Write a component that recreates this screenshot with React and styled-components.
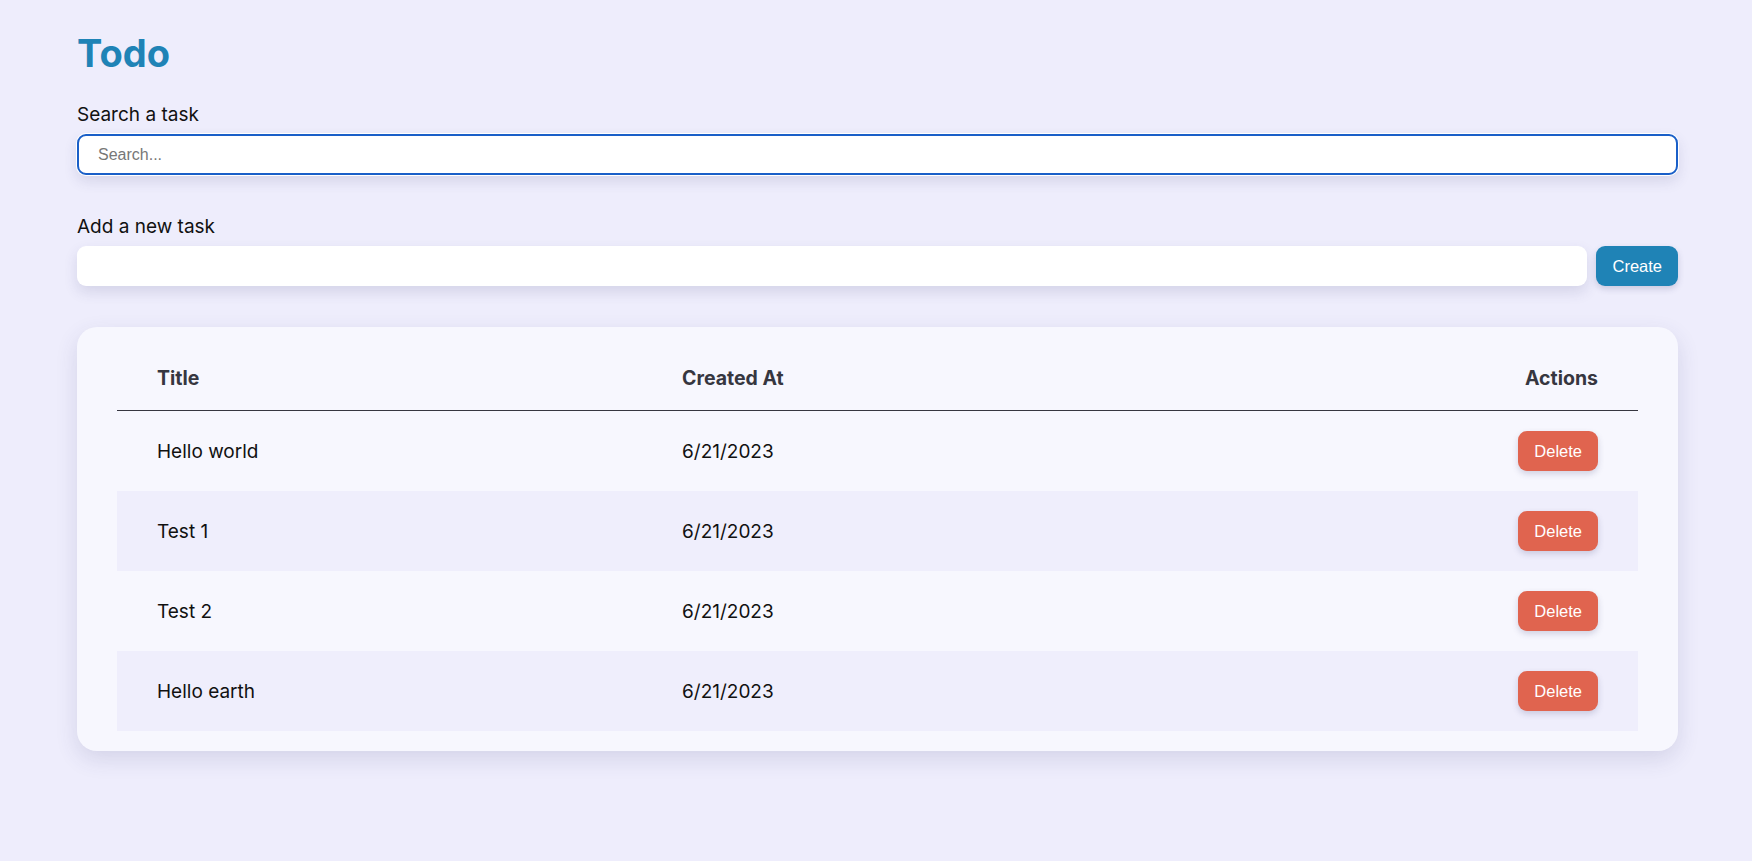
import React, {useState} from 'react'
import styled, {createGlobalStyle} from 'styled-components'

const GlobalStyle = createGlobalStyle`
  * { box-sizing: border-box; }
  body {
    margin: 0;
    background: #eeedfc;
    font-family: Inter, 'Noto Sans', sans-serif;
    color: #111;
  }
`

const Page = styled.main`
  width: 1601px;
  margin-left: 77px;
  padding-top: 29px;
  padding-bottom: 80px;
`

const Heading = styled.h1`
  margin: 0 0 26px;
  font-size: 38px;
  line-height: 48px;
  font-weight: 700;
  color: #1f83b6;
`

const Field = styled.section`
  display: flex;
  flex-direction: column;
  gap: 8px;
  margin-bottom: ${p => p.$spacing}px;
`

const Label = styled.label`
  font-size: 19px;
  line-height: 23px;
  color: #111;
`

const InputRow = styled.div`
  display: flex;
  gap: 9px;
`

const TextInput = styled.input`
  flex: 1 1 auto;
  min-width: 0;
  height: ${p => (p.$focused ? 41 : 40)}px;
  padding: 0 19px;
  border: ${p => (p.$focused ? '2px solid #1a5fc8' : '0')};
  border-radius: 9px;
  background: #fff;
  font-family: 'Liberation Sans', Arial, sans-serif;
  font-size: 16px;
  color: #222;
  outline: none;
  box-shadow: ${p => (p.$focused ? '0 0 0 1px #fff, ' : '')}0 6px 14px rgba(60, 60, 110, 0.14);
  &::placeholder { color: #777; }
`

const Button = styled.button`
  flex: none;
  height: 40px;
  padding: 0 ${p => p.$pad}px;
  border: 0;
  border-radius: 9px;
  background: ${p => p.$bg};
  color: #fff;
  font-family: 'Liberation Sans', Arial, sans-serif;
  font-size: 16.5px;
  cursor: pointer;
  box-shadow: 0 3px 6px rgba(60, 60, 110, 0.2);
`

const Card = styled.section`
  background: #f7f7fe;
  border-radius: 20px;
  padding: 20px 40px;
  box-shadow: 0 8px 22px rgba(60, 60, 110, 0.14);
`

const Grid = styled.div`
  display: grid;
  grid-template-columns: 525px 1fr 200px;
`

const HeadCell = styled.div`
  padding: 20px 40px;
  font-size: 19.5px;
  line-height: 23px;
  font-weight: 700;
  color: #363640;
  border-bottom: 1px solid #363640;
  text-align: ${p => (p.$right ? 'right' : 'left')};
`

const Cell = styled.div`
  height: 80px;
  padding: 0 40px;
  display: flex;
  align-items: center;
  justify-content: ${p => (p.$right ? 'flex-end' : 'flex-start')};
  font-size: 19px;
  line-height: 23px;
  color: #111;
  background: ${p => (p.$stripe ? '#efeefc' : 'transparent')};
`

const initialTasks = [
  {id: 1, title: 'Hello world', createdAt: '6/21/2023'},
  {id: 2, title: 'Test 1', createdAt: '6/21/2023'},
  {id: 3, title: 'Test 2', createdAt: '6/21/2023'},
  {id: 4, title: 'Hello earth', createdAt: '6/21/2023'},
]

export default function App() {
  const [tasks, setTasks] = useState(initialTasks)
  const [search, setSearch] = useState('')
  const [draft, setDraft] = useState('')

  const onCreate = () => {
    if (!draft.trim()) return
    setTasks([...tasks, {id: Date.now(), title: draft, createdAt: new Date().toLocaleDateString('en-US')}])
    setDraft('')
  }

  const visible = tasks.filter(t => t.title.toLowerCase().includes(search.toLowerCase()))

  return (
    <>
      <GlobalStyle />
      <Page>
        <Heading>Todo</Heading>

        <Field $spacing={40}>
          <Label htmlFor="search">Search a task</Label>
          <TextInput
            id="search"
            $focused
            placeholder="Search..."
            value={search}
            onChange={e => setSearch(e.target.value)}
          />
        </Field>

        <Field $spacing={41}>
          <Label htmlFor="new-task">Add a new task</Label>
          <InputRow>
            <TextInput id="new-task" value={draft} onChange={e => setDraft(e.target.value)} />
            <Button $bg="#1f83b6" $pad={16} onClick={onCreate}>
              Create
            </Button>
          </InputRow>
        </Field>

        <Card>
          <Grid>
            <HeadCell>Title</HeadCell>
            <HeadCell>Created At</HeadCell>
            <HeadCell $right>Actions</HeadCell>
            {visible.map((task, index) => (
              <React.Fragment key={task.id}>
                <Cell $stripe={index % 2 === 1}>{task.title}</Cell>
                <Cell $stripe={index % 2 === 1}>{task.createdAt}</Cell>
                <Cell $stripe={index % 2 === 1} $right>
                  <Button $bg="#e0644f" $pad={16} onClick={() => setTasks(tasks.filter(t => t.id !== task.id))}>
                    Delete
                  </Button>
                </Cell>
              </React.Fragment>
            ))}
          </Grid>
        </Card>
      </Page>
    </>
  )
}
